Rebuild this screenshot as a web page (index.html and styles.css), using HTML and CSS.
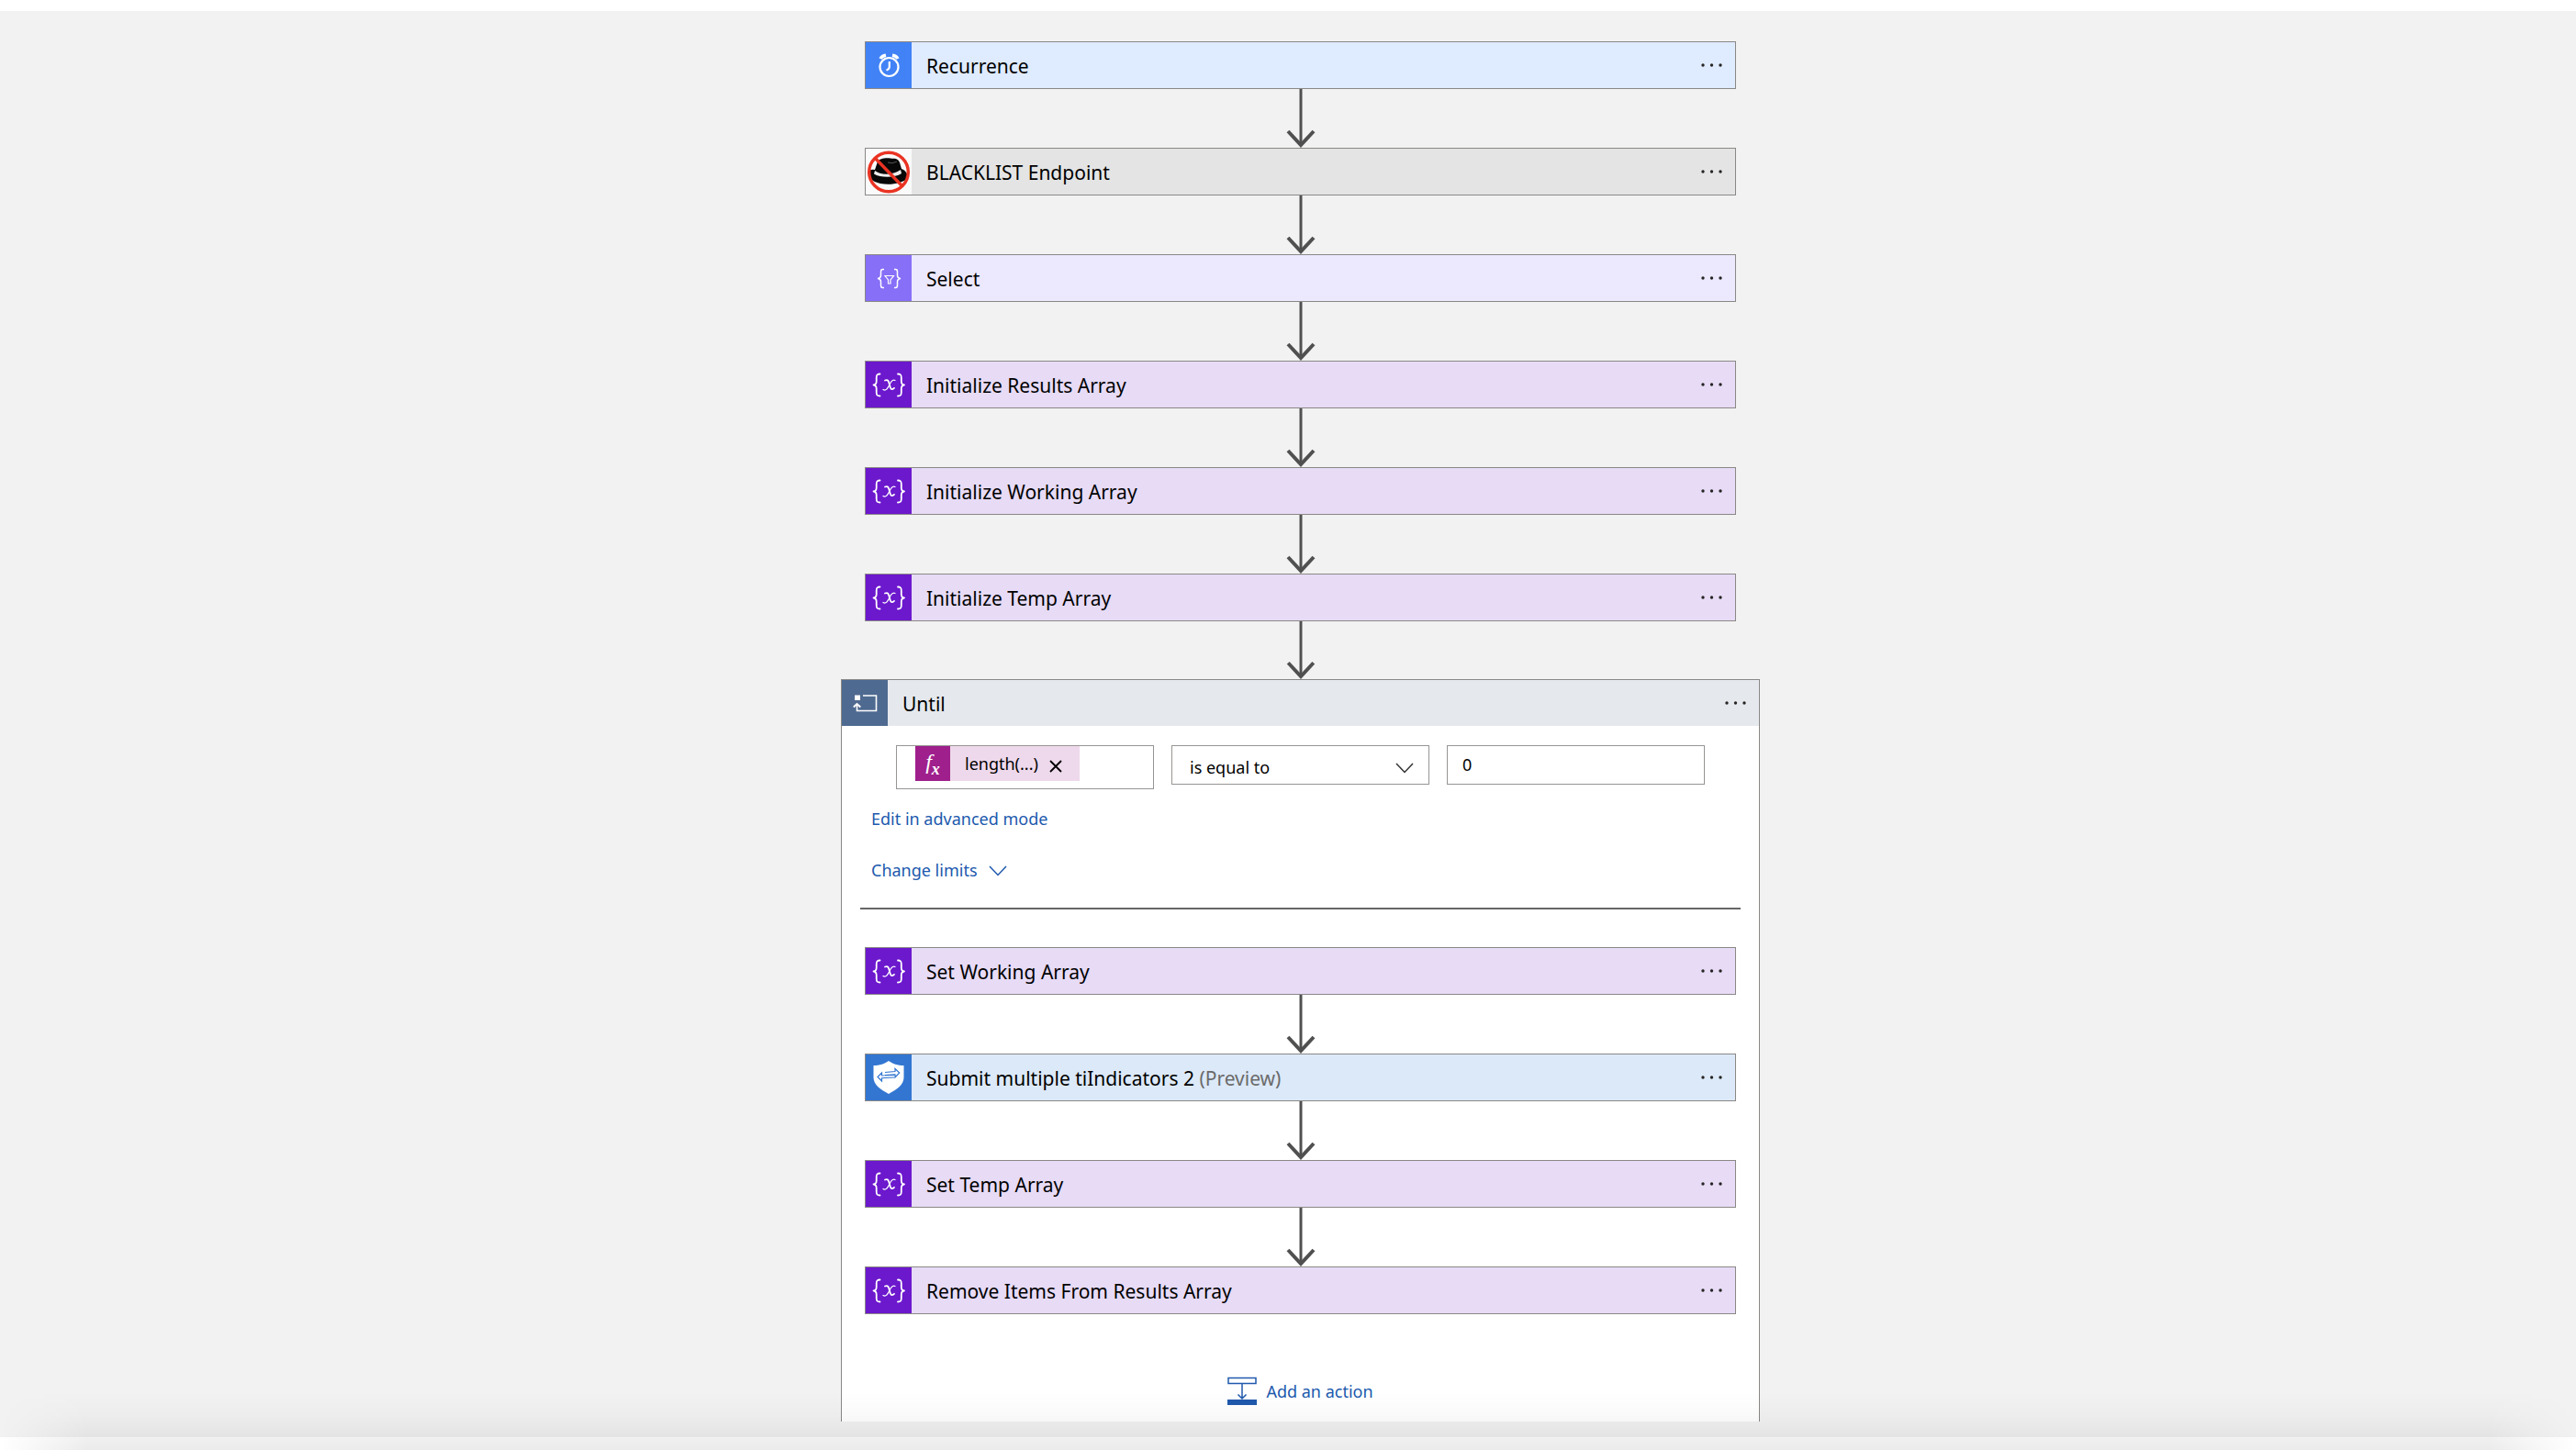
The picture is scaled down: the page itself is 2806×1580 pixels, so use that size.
FILE: index.html
```html
<!DOCTYPE html>
<html lang="en">
<head>
<meta charset="utf-8">
<title>Logic app designer</title>
<link rel="stylesheet" href="styles.css">
</head>
<body>
<svg class="sprite" aria-hidden="true">
  <symbol id="arrow" viewBox="0 0 32 64"><path d="M16 0V60" stroke-width="3" fill="none"/><path d="M2 46L16 61L30 46" stroke-width="4" fill="none"/></symbol>
  <symbol id="dots" viewBox="0 0 24 4"><circle cx="2" cy="2" r="1.7"/><circle cx="11.5" cy="2" r="1.7"/><circle cx="21" cy="2" r="1.7"/></symbol>
  <symbol id="chevron" viewBox="0 0 20 12"><path d="M1 1L10 10.500L19 1" fill="none" stroke="currentColor" stroke-width="1.500"/></symbol>
  <symbol id="variable" viewBox="0 0 50 50"><g fill="none" stroke="#fff" stroke-linecap="round" stroke-linejoin="round">
    <path stroke-width="1.800" d="M15.500 13.500C12 13.500 11.700 15 11.700 17.500V21.500C11.700 24 10.500 25.300 8.500 25.500C10.500 25.700 11.700 27 11.700 29.500V33.500C11.700 36 12 37.500 15.500 37.500"/>
    <path stroke-width="1.800" d="M35 13.500C38.500 13.500 38.800 15 38.800 17.500V21.500C38.800 24 40 25.300 42 25.500C40 25.700 38.800 27 38.800 29.500V33.500C38.800 36 38.500 37.500 35 37.500"/>
    <path stroke-width="1.800" d="M21 20.500C24.500 19 25 21.500 26 25.500C27 30 28 31.500 31 28.800"/><path stroke-width="1.300" d="M32 20.500C29 18.800 27 23 25.500 26C24 29 22 32.500 19 30.500"/></g>
  </symbol>
</svg>
<main class="designer">
  <div class="workflow">
    <section class="card recurrence">
      <svg class="icon" viewBox="0 0 50 50" aria-hidden="true"><g fill="none" stroke="#fff"><circle cx="25.500" cy="27" r="10" stroke-width="2.200"/><path d="M25.800 21V27Q25.600 29.500 22.500 30.500" stroke-width="2.200"/><path d="M16 18Q17.500 15 22 14.300M35 18Q33.500 15 29 14.300" stroke-width="3.400"/></g></svg>
      <h2 class="title">Recurrence</h2>
      <button class="more" aria-label="More options"><svg><use href="#dots"/></svg></button>
    </section>
    <svg class="connector"><use href="#arrow"/></svg>
    <section class="card endpoint">
      <svg class="icon" viewBox="0 0 50 50" aria-hidden="true"><path d="M3 25C1 31 7 36 16 38C27 40 40 38 46 32C46 28 44 24 39 22L37 15C35 10 31 11 27 10.500C21 9.500 15 11 13 14L10 23Q5 22 3 25Z" fill="#080808"/><path d="M10 24C16 29 30 29 38 23L39 27C32 32 16 32 9 27.500Z" fill="#eee"/><path d="M24 15Q29 17 34 14" stroke="#555" fill="none"/><g fill="none" stroke="#ea3323" stroke-width="3.400"><circle cx="25" cy="25.500" r="21.300"/><path d="M10 10L40 41"/></g></svg>
      <h2 class="title">BLACKLIST Endpoint</h2>
      <button class="more" aria-label="More options"><svg><use href="#dots"/></svg></button>
    </section>
    <svg class="connector"><use href="#arrow"/></svg>
    <section class="card select">
      <svg class="icon" viewBox="0 0 50 50" aria-hidden="true"><g fill="none" stroke="#fff" stroke-width="1.500"><path d="M20 15.500H18.500Q16.500 15.500 16.500 18V22Q16.500 25 13 25.500Q16.500 26 16.500 29V33Q16.500 35.500 18.500 35.500H20"/><path d="M31 15.500H32.500Q34.500 15.500 34.500 18V22Q34.500 25 38 25.500Q34.500 26 34.500 29V33Q34.500 35.500 32.500 35.500H31"/><path stroke-width="1.200" d="M21 22.500H30.500L27 27V31H24.500V27Z"/></g></svg>
      <h2 class="title">Select</h2>
      <button class="more" aria-label="More options"><svg><use href="#dots"/></svg></button>
    </section>
    <svg class="connector"><use href="#arrow"/></svg>
    <section class="card variable">
      <svg class="icon" aria-hidden="true"><use href="#variable"/></svg>
      <h2 class="title">Initialize Results Array</h2>
      <button class="more" aria-label="More options"><svg><use href="#dots"/></svg></button>
    </section>
    <svg class="connector"><use href="#arrow"/></svg>
    <section class="card variable">
      <svg class="icon" aria-hidden="true"><use href="#variable"/></svg>
      <h2 class="title">Initialize Working Array</h2>
      <button class="more" aria-label="More options"><svg><use href="#dots"/></svg></button>
    </section>
    <svg class="connector"><use href="#arrow"/></svg>
    <section class="card variable">
      <svg class="icon" aria-hidden="true"><use href="#variable"/></svg>
      <h2 class="title">Initialize Temp Array</h2>
      <button class="more" aria-label="More options"><svg><use href="#dots"/></svg></button>
    </section>
    <svg class="connector last"><use href="#arrow"/></svg>

    <section class="scope">
      <header class="scope-head">
        <svg class="icon" viewBox="0 0 50 50" aria-hidden="true"><g fill="none" stroke="#fff"><path stroke-width="1.600" d="M23 17H37.500V33.500H16.500V26"/><path stroke-width="2" d="M12.800 29.500L16.500 26L20.300 29.500"/></g><path fill="#fff" d="M14 16.500H20V22H14Z"/></svg>
        <h2 class="title">Until</h2>
        <button class="more" aria-label="More options"><svg><use href="#dots"/></svg></button>
      </header>
      <form class="condition">
        <div class="field token-field">
          <span class="token"><span class="fx">f<sub>x</sub></span><span class="token-text">length(...)</span><button type="button" class="remove" aria-label="Remove"><svg viewBox="0 0 14 14"><path d="M1 1L13 13M13 1L1 13" stroke="#000" stroke-width="1.800"/></svg></button></span>
        </div>
        <div class="field select-field">
          <select aria-label="Operator"><option>is equal to</option></select>
          <svg class="chevron"><use href="#chevron"/></svg>
        </div>
        <input class="field value" aria-label="Value" value="0">
      </form>
      <div class="links">
        <a href="#advanced">Edit in advanced mode</a>
        <a href="#limits">Change limits <svg class="chevron"><use href="#chevron"/></svg></a>
      </div>
      <hr class="rule">
      <div class="steps">
        <section class="card variable">
          <svg class="icon" aria-hidden="true"><use href="#variable"/></svg>
          <h2 class="title">Set Working Array</h2>
          <button class="more" aria-label="More options"><svg><use href="#dots"/></svg></button>
        </section>
        <svg class="connector"><use href="#arrow"/></svg>
        <section class="card security">
          <svg class="icon" viewBox="0 0 50 50" aria-hidden="true"><path fill="#fff" d="M25 7C29 10 35 12 41.500 12V25C41.500 33 34 38 25 43C16 38 8.500 33 8.500 25V12C15 12 21 10 25 7Z"/><path fill="none" stroke="#3276d2" stroke-width="1.200" d="M21 19.500L32 18.500V15.500L36.700 20L32 25V22L21 22.700M31 25L17.500 25.700V29L13 24.500L17.500 20V23L31 22.500"/></svg>
          <h2 class="title">Submit multiple tiIndicators 2 <span class="preview">(Preview)</span></h2>
          <button class="more" aria-label="More options"><svg><use href="#dots"/></svg></button>
        </section>
        <svg class="connector"><use href="#arrow"/></svg>
        <section class="card variable">
          <svg class="icon" aria-hidden="true"><use href="#variable"/></svg>
          <h2 class="title">Set Temp Array</h2>
          <button class="more" aria-label="More options"><svg><use href="#dots"/></svg></button>
        </section>
        <svg class="connector"><use href="#arrow"/></svg>
        <section class="card variable">
          <svg class="icon" aria-hidden="true"><use href="#variable"/></svg>
          <h2 class="title">Remove Items From Results Array</h2>
          <button class="more" aria-label="More options"><svg><use href="#dots"/></svg></button>
        </section>
      </div>
      <button class="add"><svg viewBox="0 0 32 32" aria-hidden="true"><g fill="none" stroke="#2059ad" stroke-width="1.500"><path d="M1 1.500H31V7.500H1ZM16 8V24M11.500 19.500L16 24L20.500 19.500"/></g><path fill="#2059ad" d="M0 25H32V31H0Z"/></svg>Add an action</button>
    </section>
  </div>
</main>
</body>
</html>
```
FILE: styles.css
```css
* { box-sizing: border-box; }
body {
  margin: 0;
  padding: 12px 0 14px;
  position: relative;
  background: #fff;
  color: #000;
  font-family: "Noto Sans", sans-serif;
  font-size: 18px;
  line-height: 26px;
}
/* soft shadow rising from the bottom edge of the window */
body::after {
  content: "";
  position: absolute;
  bottom: 0;
  left: 0;
  right: 0;
  height: 64px;
  background: linear-gradient(rgba(0, 0, 0, 0), rgba(0, 0, 0, 0.02) 40%, rgba(0, 0, 0, 0.08));
  -webkit-mask-image: linear-gradient(90deg, transparent, #000 96px, #000 calc(100% - 96px), transparent);
  mask-image: linear-gradient(90deg, transparent, #000 96px, #000 calc(100% - 96px), transparent);
  pointer-events: none;
}
.sprite { display: none; }
.designer {
  padding: 33px 0 17px 27px;
  background: #f2f2f2;
}
.workflow, .steps {
  display: flex;
  flex-direction: column;
  align-items: center;
}
.card {
  display: flex;
  width: 100%;
  max-width: 949px;
  height: 52px;
  border: 1px solid #8a8886;
}
.icon { flex: none; width: 50px; height: 50px; }
.title {
  flex: 1;
  margin: 0;
  padding-left: 16px;
  font-size: 21px;
  font-weight: 400;
  line-height: 52px;
  white-space: nowrap;
}
.preview { color: #6b6b6b; }
.more {
  display: flex;
  align-items: center;
  padding: 0 13px;
  border: 0;
  background: none;
}
.more svg { width: 24px; height: 4px; fill: #252423; }
.recurrence { background: #dfebfe; }
.recurrence .icon { background: #4183f6; }
.endpoint { background: #e4e4e4; }
.endpoint .icon { background: #fafafa; }
.select { background: #ece8fe; }
.select .icon { background: #876ff7; }
.variable { background: #e7dbf6; }
.variable .icon { background: #6c18cd; }
.security { background: #dce9f8; }
.security .icon { background: #3276d2; }
.connector { flex: none; width: 32px; height: 64px; stroke: #505050; }
.connector.last { height: 63px; }
.scope {
  width: 100%;
  max-width: 1001px;
  border: 1px solid #8a8886;
  border-bottom: 0;
  background: #fff;
}
.scope-head { display: flex; height: 50px; background: #e5e8ed; }
.scope-head .icon { background: #4f6a90; }
.condition {
  display: grid;
  grid-template-columns: repeat(3, 1fr);
  align-items: start;
  gap: 19px;
  padding: 21px 59px 0;
}
.field {
  width: 100%;
  height: 43px;
  border: 1px solid #979593;
  background: #fff;
}
.token-field { height: 48px; padding-left: 20px; }
.token {
  display: inline-flex;
  align-items: center;
  height: 38px;
  padding-right: 19px;
  background: #eed9ec;
}
.fx {
  width: 38px;
  height: 38px;
  background: #9f1f8c;
  color: #fff;
  font: italic 24px/34px "Liberation Serif", serif;
  text-align: center;
}
.fx sub { font-size: 18px; line-height: 0; font-weight: 700; }
.token-text { padding: 0 12px 0 16px; }
.remove { display: flex; padding: 6px 0 0; border: 0; background: none; }
.remove svg { width: 14px; height: 14px; }
.select-field { display: flex; align-items: center; position: relative; }
select {
  appearance: none;
  width: 100%;
  height: 100%;
  padding: 4px 19px 0;
  border: 0;
  background: none;
  color: inherit;
  font: inherit;
}
.chevron { width: 20px; height: 12px; }
.select-field .chevron { position: absolute; right: 16px; top: 18px; color: #333; pointer-events: none; }
.value { padding: 0 16px 2px; color: inherit; font: inherit; }
.links {
  display: flex;
  flex-direction: column;
  align-items: flex-start;
  gap: 30px;
  padding: 19px 32px 0;
}
.links a { color: #2059ad; text-decoration: none; }
.links .chevron { margin-left: 8px; }
.rule { height: 2px; margin: 28px 20px 41px; border: 0; background: #666; }
.add {
  display: flex;
  align-items: center;
  gap: 10px;
  margin: 68px auto 0;
  padding: 0 0 17px;
  border: 0;
  background: none;
  color: #2059ad;
  font: inherit;
}
.add svg { width: 32px; height: 32px; }
```
